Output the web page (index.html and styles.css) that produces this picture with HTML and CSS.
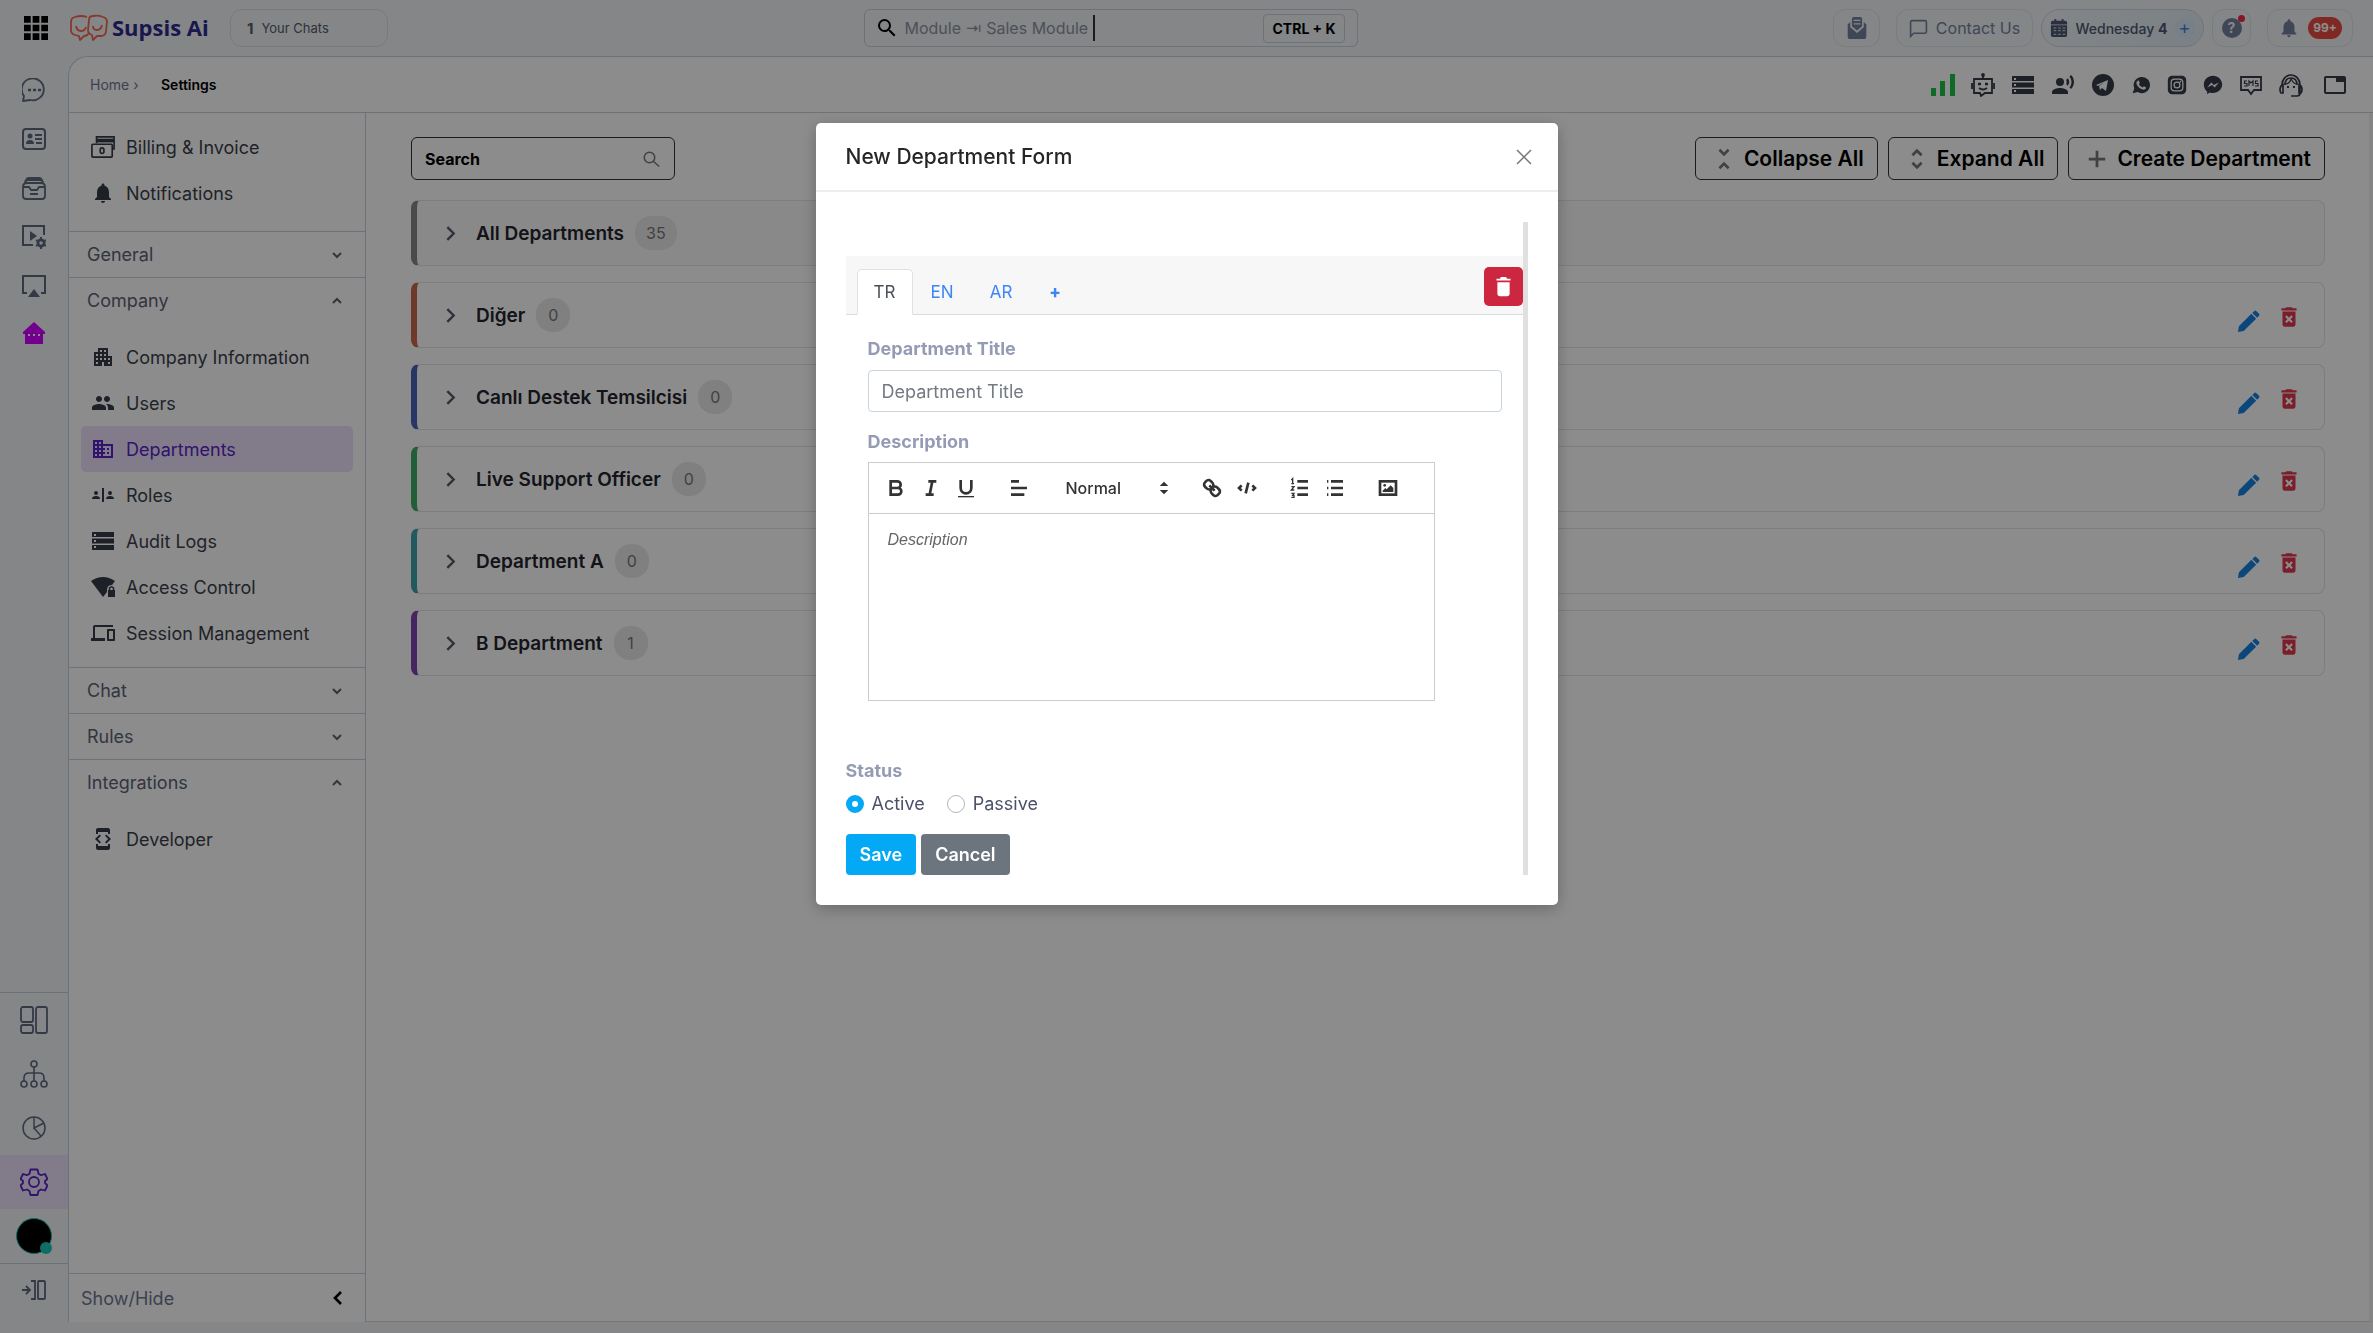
FILE: index.html
```html
<!DOCTYPE html>
<html lang="en">

<head>
    <meta charset="utf-8">
    <title>Supsis Ai - Departments</title>
    <link rel="stylesheet" href="styles.css">
</head>

<body>
    <!-- icon set -->
    <svg class="sprite" aria-hidden="true">
        <symbol id="i-chevron" viewBox="0 0 24 24"><path d="M6 9l6 6 6-6" fill="none" stroke="currentColor" stroke-width="3"/></symbol>
        <symbol id="i-right" viewBox="0 0 24 24"><path d="M8 4l8 8-8 8" fill="none" stroke="currentColor" stroke-width="3"/></symbol>
        <symbol id="i-search" viewBox="0 0 24 24"><path d="M15.5 14h-.79l-.28-.27A6.471 6.471 0 0 0 16 9.5 6.5 6.5 0 1 0 9.5 16c1.61 0 3.09-.59 4.23-1.57l.27.28v.79l5 4.99L20.49 19l-4.99-5zm-6 0C7.01 14 5 11.99 5 9.5S7.01 5 9.5 5 14 7.01 14 9.5 11.99 14 9.5 14z"/></symbol>
        <symbol id="i-bell" viewBox="0 0 24 24"><path d="M12 22c1.1 0 2-.9 2-2h-4c0 1.1.89 2 2 2zm6-6v-5c0-3.07-1.64-5.64-4.5-6.32V4c0-.83-.67-1.5-1.5-1.5s-1.5.67-1.5 1.5v.68C7.63 5.36 6 7.92 6 11v5l-2 2v1h16v-1l-2-2z"/></symbol>
        <symbol id="i-storage" viewBox="0 0 24 24"><path d="M1 21h22v-5H1v5zm2-4h2v2H3v-2zM1 3v5h22V3H1zm4 4H3V5h2v2zm-4 7.500h22v-5H1v5zm2-3.500h2v2H3v-2z"/></symbol>
        <symbol id="i-pencil" viewBox="0 0 24 24"><path d="M1 23l1-6L15 4l5 5L7 22zM16 3l2-2q1-1 2 0l3 3q1 1 0 2l-2 2z"/></symbol>
        <symbol id="i-remove" viewBox="0 0 24 24"><path d="M6 19c0 1.1.9 2 2 2h8c1.1 0 2-.9 2-2V7H6v12zm2.46-7.12l1.41-1.41L12 12.59l2.12-2.12 1.41 1.41L13.41 14l2.12 2.12-1.41 1.41L12 15.41l-2.12 2.12-1.41-1.41L10.59 14l-2.13-2.12zM15.5 4l-1-1h-5l-1 1H5v2h14V4z"/></symbol>
    </svg>

    <header class="topbar">
        <button class="apps" aria-label="Apps">
            <svg viewBox="0 0 25 25"><path d="M0 0h7v7H0zM9 0h7v7H9zM18 0h7v7h-7zM0 9h7v7H0zM9 9h7v7H9zM18 9h7v7h-7zM0 18h7v7H0zM9 18h7v7H9zM18 18h7v7h-7z"/></svg>
        </button>
        <a class="logo" href="#">
            <svg viewBox="0 0 38 28" fill="none" stroke="#f4694f" stroke-width="1.8" stroke-linejoin="round">
                <path d="M17 3Q11 1 5 3 1 4 1 8v8q0 4 4 5l4 1 1 4 4-4q4 0 5-4"/>
                <path d="M23 2q-4 0-4 4l-1 10q0 4 4 5l1 5 4-4h5q4-1 4-5l1-9q0-4-4-5-5-2-10-1z"/>
                <path d="M6 12q1 5 5 5t5-4M23 12q0 4 4 4t5-5"/>
            </svg>
            <span>Supsis Ai</span>
        </a>
        <div class="your-chats"><b>1</b> Your Chats</div>

        <div class="module-search">
            <svg><use href="#i-search"/></svg>
            <input type="text" aria-label="Search module" placeholder="Module ⇥ Sales Module">
            <i class="caret"></i>
            <kbd>CTRL + K</kbd>
        </div>

        <div class="top-actions">
            <button class="pill inbox" aria-label="Inbox">
                <svg viewBox="0 0 22 26"><path d="M5 2q0-2 2-2h8q2 0 2 2v9l-6 5-6-5zM0 9l3-3v6l8 7 8-7V6l3 3v14q0 3-3 3H3q-3 0-3-3z"/><path d="M7 4h8M7 8h8" stroke="#f0f4f8" stroke-width="1.5"/></svg>
            </button>
            <button class="pill contact">
                <svg viewBox="0 0 24 24" fill="none" stroke="currentColor" stroke-width="2"><path d="M2 22V4q0-2 2-2h16q2 0 2 2v12q0 2-2 2H6z"/></svg>
                Contact Us
            </button>
            <button class="pill date">
                <svg viewBox="0 0 18 20"><path d="M4 0h2v2h6V0h2v2h2q2 0 2 2v2H0V4q0-2 2-2h2zM0 7h18v11q0 2-2 2H2q-2 0-2-2z"/><path d="M3 10h3M8 10h3M13 10h3M3 13h3M8 13h3M13 13h3M3 17h3M8 17h3M13 17h3" stroke="#f0f4f8" stroke-width="1"/></svg>
                <span>Wednesday <b>4</b></span>
                <i class="plus">+</i>
            </button>
            <button class="pill help" aria-label="Help">
                <span class="question">?</span>
                <i class="red-dot"></i>
            </button>
            <button class="pill alerts" aria-label="Notifications">
                <svg><use href="#i-bell"/></svg>
                <span class="count">99+</span>
            </button>
        </div>
    </header>

    <div class="layout">
        <nav class="rail" aria-label="Modules">
            <div class="rail-top">
                <a href="#" aria-label="Chats"><svg viewBox="0 0 24 24" fill="none" stroke="currentColor" stroke-width="1.8"><path d="M1 23l1-5A11 11 0 1 1 8 22z" stroke-linejoin="round"/><path d="M6 12h3M11 12h3M16 12h3" stroke-width="2.5"/></svg></a>
                <a href="#" aria-label="Contacts"><svg viewBox="0 0 24 24"><rect x="1" y="2" width="22" height="20" rx="3" fill="none" stroke="currentColor" stroke-width="2"/><circle cx="8" cy="9" r="2.5"/><path d="M4 17q0-4 4-4t4 4zM13 7h7v2h-7zM13 11h7v2h-7zM14 15h6v2h-6z"/></svg></a>
                <a href="#" aria-label="Archive"><svg viewBox="0 0 24 24" fill="none" stroke="currentColor" stroke-width="1.8"><path d="M4 4q1-2 3-2h10q2 0 3 2M3 7q0-3 3-3h12q3 0 3 3M1 11q0-4 4-4h14q4 0 4 4v9q0 3-3 3H4q-3 0-3-3zM1 11h6l2 3h6l2-3h6M8 18h8"/></svg></a>
                <a href="#" aria-label="Media settings"><svg viewBox="0 0 24 24"><path d="M11 20H1V1h21v9" fill="none" stroke="currentColor" stroke-width="2"/><path d="M8 6l7 5-7 5z"/><circle cx="19" cy="18" r="3" fill="none" stroke="currentColor" stroke-width="3"/><path d="M19 12v12M14 15l10 6M24 15l-10 6" stroke="currentColor" stroke-width="2"/><circle cx="19" cy="18" r="1.7" fill="#f0f4f8"/></svg></a>
                <a href="#" aria-label="Screen"><svg viewBox="0 0 24 24"><path d="M5 19H1V2h22v17h-4" fill="none" stroke="currentColor" stroke-width="2"/><path d="M12 15l6 8H6z"/></svg></a>
                <a href="#" aria-label="Bot home" class="house"><svg viewBox="0 0 24 24"><path d="M12 1l11 10v2h-2v10H3V13H1v-2z"/><path d="M6 14h2M11 14h2M16 14h2" stroke="#fff" stroke-width="2"/></svg></a>
            </div>
            <div class="rail-bottom">
                <a href="#" aria-label="Boards"><svg class="big" viewBox="0 0 28 28" fill="none" stroke="currentColor" stroke-width="1.8"><rect x="1" y="1" width="12" height="15" rx="2"/><rect x="1" y="19" width="12" height="8" rx="2"/><rect x="16" y="1" width="11" height="26" rx="2"/></svg></a>
                <a href="#" aria-label="Flow"><svg class="big" viewBox="0 0 28 28" fill="none" stroke="currentColor" stroke-width="1.6"><circle cx="14" cy="4" r="3"/><circle cx="4" cy="24" r="3"/><circle cx="14" cy="24" r="3"/><circle cx="24" cy="24" r="3"/><path d="M14 7v14M4 21v-3q0-5 5-5h10q5 0 5 5v3"/></svg></a>
                <a href="#" aria-label="Reports"><svg viewBox="0 0 24 24" fill="none" stroke="currentColor" stroke-width="1.5"><circle cx="12" cy="12" r="11"/><path d="M12 1v11l10-5M12 12l7 8"/></svg></a>
                <a href="#" aria-label="Settings" class="active"><svg class="big" viewBox="0 0 28 28" fill="none" stroke="currentColor" stroke-width="1.8" stroke-linejoin="round"><circle cx="14" cy="14" r="5"/><path d="M10.500 1.500h7l1 4.200 2.500 1.500 4-1.200 2.500 5-2.500 2v2l2.500 2.500-2.500 5-4-1-2.500 1.500-1 4h-7l-1-4L7 21.500l-4 1-2.500-5L3 15v-2L.5 11 3 6l4 1.200 2.500-1.500z"/></svg></a>
                <a href="#" aria-label="Profile"><span class="avatar"><i></i></span></a>
            </div>
            <button class="rail-toggle" aria-label="Expand menu"><svg viewBox="0 0 24 20" fill="none" stroke="currentColor" stroke-width="1.8"><path d="M0 10h7M4 6l4 4-4 4M9 1h4v18H9"/><rect x="16" y="1" width="7" height="18" rx="1"/></svg></button>
        </nav>

        <div class="page">
            <div class="crumbs">
                <a href="#">Home ›</a>
                <strong>Settings</strong>
                <div class="channels">
                    <svg class="signal" viewBox="0 0 24 24"><path d="M0 15h5v8H0zM9 8h5v15H9zM19 1h5v22h-5z"/></svg>
                    <svg viewBox="0 0 24 24" fill="none" stroke="currentColor" stroke-width="1.8"><circle cx="12" cy="2" r="1"/><path d="M12 3v3M3 6h18v14h-7l-4 3-1-3H3zM1 10v6M23 10v6M8 15q4 3 8 0"/><path d="M7 11h3M14 11h3" stroke-width="2.500"/></svg>
                    <svg><use href="#i-storage"/></svg>
                    <svg viewBox="0 0 24 24"><circle cx="9" cy="9" r="4"/><path d="M9 15c-2.670 0-8 1.340-8 4v2h16v-2c0-2.660-5.330-4-8-4zM16.760 5.360l-1.680 1.690c.84 1.180.84 2.710 0 3.890l1.680 1.690c2.020-2.020 2.020-5.070 0-7.270zM20.070 2l-1.630 1.630c2.770 3.020 2.770 7.560 0 10.740L20.070 16c3.900-3.890 3.910-9.950 0-14z"/></svg>
                    <svg viewBox="0 0 24 24"><circle cx="12" cy="12" r="11"/><path d="M5 12l12-5-2 11-4-3-2 2-1-4 6-4-7 4z" fill="#fff"/></svg>
                    <svg class="small" viewBox="0 0 24 24"><path d="M2 22l2-6A9.800 9.800 0 1 1 8 20.500z"/><path d="M8 7c1-1 2 0 2.500 2.500L9.500 11q1.500 3 4.500 4l1.500-1.500L18 15c0 2-2 3-4 2.500C10 16.500 7 13 6.500 10 6.500 8.500 7 7.500 8 7z" fill="#fff"/></svg>
                    <svg class="small" viewBox="0 0 24 24"><rect x="1" y="1" width="22" height="22" rx="5"/><rect x="5" y="5" width="14" height="14" rx="4" fill="none" stroke="#fff" stroke-width="1.500"/><circle cx="12" cy="12" r="3.500" fill="none" stroke="#fff" stroke-width="1.500"/><circle cx="16" cy="8" r="1" fill="#fff"/></svg>
                    <svg class="small" viewBox="0 0 24 24"><path d="M12 1C6 1 1 5.500 1 11.500 1 15 2.500 18 5 20v3l3-2q2 .6 4 .6c6 0 11-4.500 11-10.100S18 1 12 1z"/><path d="M5 15l5-6 3 3 6-3-5 6-3-3z" fill="#fff"/></svg>
                    <svg viewBox="0 0 24 24" fill="none" stroke="currentColor" stroke-width="1.800"><path d="M2 4h20v13h-7l-3 4-3-4H2z"/><path d="M8 8H5.500v2.500H8V13H5M10 13V8l2 2 2-2v5M19 8h-2.500v2.500H19V13h-3" stroke-width="1.200"/></svg>
                    <svg class="agent" viewBox="0 0 24 24" fill="none" stroke="currentColor" stroke-width="1.700"><path d="M3 12a9 10 0 0 1 18 0v8q0 3-3 3h-6M6 12Q6 5 12 5t6 7M2 13q-2 4 0 7h2v-8zM22 13q2 4 0 7h-2v-8z"/><path d="M7 11q4-1 5-5 2 4 5 5" stroke-width="1.200"/><path d="M8 14h2M14 14h2" stroke-width="2"/></svg>
                    <svg viewBox="0 0 24 24"><path d="M21 3H3c-1.100 0-2 .9-2 2v14c0 1.100.9 2 2 2h18c1.100 0 2-.9 2-2V5c0-1.100-.9-2-2-2zm0 16H3V5h10v4h8v10z"/></svg>
                </div>
            </div>

            <div class="columns">
                <aside class="menu">
                    <div class="menu-group first">
                        <a href="#"><svg viewBox="0 0 26 26" fill="none" stroke="currentColor" stroke-width="1.800"><path d="M6 9V2h19v13h-2"/><path d="M6 6h19" stroke-width="4"/><rect x="1" y="10" width="22" height="14" rx="1"/><rect x="10" y="14" width="4" height="6" rx="2"/></svg>Billing &amp; Invoice</a>
                        <a href="#"><svg><use href="#i-bell"/></svg>Notifications</a>
                    </div>
                    <button class="menu-head">General<svg><use href="#i-chevron"/></svg></button>
                    <button class="menu-head open">Company<svg><use href="#i-chevron"/></svg></button>
                    <div class="menu-group">
                        <a href="#"><svg viewBox="0 0 24 24"><path d="M17 11V3H7v4H3v14h8v-4h2v4h8V11h-4zM7 19H5v-2h2v2zm0-4H5v-2h2v2zm0-4H5V9h2v2zm4 4H9v-2h2v2zm0-4H9V9h2v2zm0-4H9V5h2v2zm4 8h-2v-2h2v2zm0-4h-2V9h2v2zm0-4h-2V5h2v2zm4 12h-2v-2h2v2zm0-4h-2v-2h2v2z"/></svg>Company Information</a>
                        <a href="#"><svg viewBox="0 0 24 24"><path d="M16 11c1.660 0 2.990-1.340 2.990-3S17.660 5 16 5c-1.660 0-3 1.340-3 3s1.340 3 3 3zm-8 0c1.660 0 2.990-1.340 2.990-3S9.660 5 8 5C6.340 5 5 6.340 5 8s1.340 3 3 3zm0 2c-2.330 0-7 1.170-7 3.500V19h14v-2.500c0-2.330-4.670-3.500-7-3.500zm8 0c-.29 0-.62.02-.97.05 1.160.84 1.970 1.970 1.970 3.450V19h6v-2.500c0-2.330-4.670-3.500-7-3.500z"/></svg>Users</a>
                        <a href="#" class="active"><svg viewBox="0 0 24 24"><path d="M12 7V3H2v18h20V7H12zM6 19H4v-2h2v2zm0-4H4v-2h2v2zm0-4H4V9h2v2zm0-4H4V5h2v2zm4 12H8v-2h2v2zm0-4H8v-2h2v2zm0-4H8V9h2v2zm0-4H8V5h2v2zm10 12h-8v-2h2v-2h-2v-2h2v-2h-2V9h8v10zm-2-8h-2v2h2v-2zm0 4h-2v2h2v-2z"/></svg>Departments</a>
                        <a href="#"><svg viewBox="0 0 24 24"><path d="M11 5h2v14h-2zM1 16q0-3 4-3t4 3zM15 16q0-3 4-3t4 3z"/><circle cx="5" cy="10" r="2"/><circle cx="19" cy="10" r="2"/></svg>Roles</a>
                        <a href="#"><svg><use href="#i-storage"/></svg>Audit Logs</a>
                        <a href="#"><svg viewBox="0 0 24 24"><path d="M0 6q12-8 24 0l-3 4q-5 0-5 5v2l-4 5z"/><path d="M17 15h7v7h-7z"/><path d="M18.500 15v-2q2-2.500 4 0v2" fill="none" stroke="currentColor" stroke-width="1.500"/></svg>Access Control</a>
                        <a href="#"><svg viewBox="0 0 24 24"><path d="M4 6h18V4H4c-1.100 0-2 .9-2 2v11H0v3h14v-3H4V6zm19 2h-6c-.55 0-1 .45-1 1v10c0 .55.45 1 1 1h6c.55 0 1-.45 1-1V9c0-.55-.45-1-1-1zm-1 10h-4v-8h4v8z"/></svg>Session Management</a>
                    </div>
                    <button class="menu-head">Chat<svg><use href="#i-chevron"/></svg></button>
                    <button class="menu-head">Rules<svg><use href="#i-chevron"/></svg></button>
                    <button class="menu-head open">Integrations<svg><use href="#i-chevron"/></svg></button>
                    <div class="menu-group">
                        <a href="#"><svg viewBox="0 0 24 24"><path d="M7 5h10v2h2V3c0-1.100-.9-1.990-2-1.990L7 1c-1.100 0-2 .9-2 2v4h2V5zm8.410 11.590L20 12l-4.590-4.590L14 8.830 17.170 12 14 15.170l1.410 1.420zM10 15.170L6.830 12 10 8.830 8.590 7.410 4 12l4.590 4.590L10 15.170zM17 19H7v-2H5v4c0 1.100.9 2 2 2h10c1.100 0 2-.9 2-2v-4h-2v2z"/></svg>Developer</a>
                    </div>
                    <button class="show-hide">Show/Hide<svg viewBox="0 0 24 24"><path d="M16 4l-8 8 8 8" fill="none" stroke="#000" stroke-width="3.500"/></svg></button>
                </aside>

                <main class="content">
                    <div class="tools">
                        <div class="search-box">
                            <input type="text" aria-label="Search departments" placeholder="Search">
                            <svg viewBox="0 0 24 24" fill="none" stroke="currentColor" stroke-width="2"><circle cx="10" cy="10" r="7"/><path d="M15 15l8 7"/></svg>
                        </div>
                        <button><svg viewBox="0 0 24 24" fill="none" stroke="currentColor" stroke-width="3"><path d="M7 2l5 5 5-5M7 22l5-5 5 5"/></svg>Collapse All</button>
                        <button><svg viewBox="0 0 24 24" fill="none" stroke="currentColor" stroke-width="3"><path d="M7 8l5-5 5 5M7 16l5 5 5-5"/></svg>Expand All</button>
                        <button><svg viewBox="0 0 24 24" fill="none" stroke="currentColor" stroke-width="3"><path d="M12 3v18M3 12h18"/></svg>Create Department</button>
                    </div>

                    <ul class="departments">
                        <li class="all"><button class="toggle" aria-label="Expand"><svg><use href="#i-right"/></svg></button>All Departments<span class="badge">35</span></li>
                        <li class="orange"><button class="toggle" aria-label="Expand"><svg><use href="#i-right"/></svg></button>Diğer<span class="badge">0</span>
                            <button class="edit" aria-label="Edit"><svg><use href="#i-pencil"/></svg></button><button class="remove" aria-label="Delete"><svg><use href="#i-remove"/></svg></button></li>
                        <li class="blue"><button class="toggle" aria-label="Expand"><svg><use href="#i-right"/></svg></button>Canlı Destek Temsilcisi<span class="badge">0</span>
                            <button class="edit" aria-label="Edit"><svg><use href="#i-pencil"/></svg></button><button class="remove" aria-label="Delete"><svg><use href="#i-remove"/></svg></button></li>
                        <li class="green"><button class="toggle" aria-label="Expand"><svg><use href="#i-right"/></svg></button>Live Support Officer<span class="badge">0</span>
                            <button class="edit" aria-label="Edit"><svg><use href="#i-pencil"/></svg></button><button class="remove" aria-label="Delete"><svg><use href="#i-remove"/></svg></button></li>
                        <li class="teal"><button class="toggle" aria-label="Expand"><svg><use href="#i-right"/></svg></button>Department A<span class="badge">0</span>
                            <button class="edit" aria-label="Edit"><svg><use href="#i-pencil"/></svg></button><button class="remove" aria-label="Delete"><svg><use href="#i-remove"/></svg></button></li>
                        <li class="purple"><button class="toggle" aria-label="Expand"><svg><use href="#i-right"/></svg></button>B Department<span class="badge">1</span>
                            <button class="edit" aria-label="Edit"><svg><use href="#i-pencil"/></svg></button><button class="remove" aria-label="Delete"><svg><use href="#i-remove"/></svg></button></li>
                    </ul>
                </main>
            </div>
        </div>
    </div>

    <div class="overlay">
        <div class="modal" role="dialog" aria-labelledby="modal-title">
            <div class="modal-header">
                <h2 id="modal-title">New Department Form</h2>
                <button class="close" aria-label="Close"><svg viewBox="0 0 16 16"><path d="M1 1l14 14M15 1L1 15" stroke="currentColor" stroke-width="1.500"/></svg></button>
            </div>
            <form class="modal-body">
                <div class="tabs">
                    <button type="button" class="tab active">TR</button>
                    <button type="button" class="tab">EN</button>
                    <button type="button" class="tab">AR</button>
                    <button type="button" class="tab add">+</button>
                    <button type="button" class="delete" aria-label="Delete language"><svg viewBox="0 0 24 24"><path d="M5 20q0 3 3 3h8q3 0 3-3V7H5zM20 3h-4l-1-2H9L8 3H4v2h16z"/></svg></button>
                </div>

                <div class="fields">
                    <label for="title">Department Title</label>
                    <input type="text" id="title" name="title" placeholder="Department Title">
                    <label for="description">Description</label>
                    <div class="editor">
                        <div class="editor-tools">
                            <button type="button" aria-label="Bold"><svg viewBox="0 0 18 18"><path d="M5 4h5a2.500 2.500 0 0 1 0 5H5zM5 9h5.500a2.500 2.500 0 0 1 0 5H5z"/></svg></button>
                            <button type="button" aria-label="Italic"><svg viewBox="0 0 18 18"><path d="M7 4h6M5 14h6M8 14l2-10"/></svg></button>
                            <button type="button" aria-label="Underline" class="end"><svg viewBox="0 0 18 18"><path d="M5 3v6a4 4 0 0 0 8 0V3"/><path d="M3 15.500h12" stroke-width="1"/></svg></button>
                            <button type="button" aria-label="Align" class="end"><svg viewBox="0 0 18 18"><path d="M3 9h12M3 14h10M3 4h6"/></svg></button>
                            <select aria-label="Text size">
                                <option>Normal</option>
                                <option>Heading</option>
                            </select>
                            <svg class="updown" viewBox="0 0 18 18"><path d="M7 11h4l-2 2zM7 7h4L9 5z"/></svg>
                            <button type="button" aria-label="Link"><svg viewBox="0 0 18 18"><path d="M7 7l4 4M8.900 4.577a3.476 3.476 0 0 1 .36 4.679A3.476 3.476 0 0 1 4.577 8.900C3.185 7.500 2.035 6.400 4.217 4.217S7.500 3.185 8.900 4.577zM13.423 9.100a3.476 3.476 0 0 0-4.679-.36 3.476 3.476 0 0 0 .36 4.679c1.392 1.392 2.500 2.542 4.679.36S14.815 10.500 13.423 9.100z"/></svg></button>
                            <button type="button" aria-label="Code" class="end"><svg viewBox="0 0 18 18"><path d="M5 7L3 9l2 2M13 7l2 2-2 2M10 5L8 13"/></svg></button>
                            <button type="button" aria-label="Ordered list"><svg viewBox="0 0 18 18"><path d="M7 4h8M7 9h8M7 14h8"/><path d="M2.500 3l1-1v4M2.500 5.700h2M2.500 8h2l-2 2.500h2.200M2.500 13h2l-1 1.500h1V16h-2" stroke-width="1"/></svg></button>
                            <button type="button" aria-label="Bullet list" class="end"><svg viewBox="0 0 18 18"><path d="M6 4h9M6 9h9M6 14h9M3 4h1M3 9h1M3 14h1"/></svg></button>
                            <button type="button" aria-label="Image"><svg viewBox="0 0 18 18"><rect x="3" y="4" width="12" height="10"/><circle cx="6.500" cy="7" r="1" fill="currentColor" stroke="none"/><path d="M5 12v-1l2-2 1 1 3-3 2 2v3z" fill="currentColor" stroke="none"/></svg></button>
                        </div>
                        <textarea id="description" name="description" placeholder="Description"></textarea>
                    </div>
                </div>

                <fieldset>
                    <legend>Status</legend>
                    <input type="radio" id="active" name="status" checked>
                    <label for="active">Active</label>
                    <input type="radio" id="passive" name="status">
                    <label for="passive">Passive</label>
                </fieldset>
                <div class="form-buttons">
                    <button type="button" class="save">Save</button>
                    <button type="button" class="cancel">Cancel</button>
                </div>
            </form>
        </div>
    </div>
</body>

</html>
```
FILE: styles.css
```css
* {
    box-sizing: border-box;
}

body {
    margin: 0;
    height: 100vh;
    padding-bottom: 11px;
    display: flex;
    flex-direction: column;
    background: #f0f4f8;
    color: #3b3f4c;
    font-family: Inter, "Liberation Sans", sans-serif;
    font-size: 18px;
}

button,
input,
select,
textarea {
    font: inherit;
    color: inherit;
}

button {
    padding: 0;
    border: none;
    background: none;
    cursor: pointer;
}

a {
    color: inherit;
    text-decoration: none;
}

svg {
    width: 24px;
    height: 24px;
    fill: currentColor;
    flex: none;
}

svg[fill="none"] {
    fill: none;
}

i {
    font-style: normal;
}

.sprite {
    display: none;
}

/* top bar */
.topbar {
    height: 56px;
    flex: none;
    display: flex;
    align-items: center;
    padding: 0 20px 0 24px;
}

.apps {
    display: flex;
    color: #000;
    margin-right: 22px;
}

.logo {
    display: flex;
    align-items: center;
    gap: 4px;
    width: 138px;
    margin-right: 22px;
    color: #2f2a8c;
    font-family: "Open Sans", sans-serif;
    font-size: 22px;
    font-weight: 700;
    line-height: 26px;
    white-space: nowrap;
}

.logo svg {
    width: 38px;
    height: 28px;
}

.logo span {
    padding-bottom: 3px;
}

.your-chats {
    width: 158px;
    height: 38px;
    padding: 0 16px;
    display: flex;
    align-items: center;
    gap: 8px;
    border: 1px solid #d9dfe6;
    border-radius: 12px;
    color: #555b68;
    font-size: 13px;
}

.your-chats b {
    font-size: 15px;
}

.module-search {
    width: 494px;
    height: 38px;
    margin: 0 auto;
    padding: 0 12px 0 10px;
    display: flex;
    align-items: center;
    border: 1px solid #c5cfda;
    border-radius: 6px;
}

.module-search svg {
    color: #000;
    margin-right: 6px;
}

.module-search input {
    width: 188px;
    padding: 0;
    border: none;
    background: none;
    font-size: 16px;
}

.module-search input::placeholder {
    color: #8c929d;
}

.caret {
    width: 2px;
    height: 26px;
    background: #333;
}

kbd {
    margin-left: auto;
    height: 29px;
    padding: 0 8px;
    border: 1px solid #c5cfda;
    border-radius: 4px;
    color: #000;
    font: 700 14px/27px Inter, sans-serif;
}

.top-actions {
    display: flex;
    gap: 8px;
    color: #74829e;
}

.pill {
    height: 38px;
    display: flex;
    align-items: center;
    justify-content: center;
    gap: 8px;
    border: 1px solid #dde3ea;
    border-radius: 12px;
}

.inbox {
    width: 47px;
    margin-right: 8px;
}

.inbox svg {
    width: 22px;
    height: 22px;
}

.contact {
    width: 137px;
    font-size: 16px;
}

.contact svg {
    width: 19px;
    height: 19px;
}

.date {
    width: 163px;
    border-radius: 19px;
    border-color: #ccd5df;
    background: linear-gradient(135deg, #f0f4f8, #dfeaf3);
    color: #4d5870;
    font-size: 14px;
    font-weight: 500;
    gap: 7px;
}

.date svg {
    width: 18px;
    height: 18px;
}

.date .plus {
    width: 20px;
    height: 20px;
    border-radius: 10px;
    background: #d9e8f7;
    color: #3f86d8;
    font-size: 18px;
    font-weight: 400;
    line-height: 19px;
}

.help {
    position: relative;
    width: 39px;
    margin-right: 8px;
}

.question {
    width: 20px;
    height: 20px;
    border-radius: 50%;
    background: #74829e;
    color: #f0f4f8;
    font-size: 14px;
    font-weight: 700;
    line-height: 20px;
}

.red-dot {
    position: absolute;
    top: 5px;
    right: 5px;
    width: 7px;
    height: 7px;
    border-radius: 50%;
    background: #f02849;
}

.alerts {
    width: 86px;
}

.alerts svg {
    width: 22px;
    height: 22px;
}

.count {
    padding: 0 5px;
    height: 22px;
    border-radius: 11px;
    background: #ea4a43;
    color: #fff;
    font-size: 12px;
    font-weight: 700;
    line-height: 22px;
}

.layout {
    flex: 1;
    min-height: 0;
    display: flex;
}

/* icon rail */
.rail {
    width: 68px;
    display: flex;
    flex-direction: column;
    color: #5f6980;
}

.rail a,
.rail-toggle {
    display: flex;
    align-items: center;
    justify-content: center;
}

.rail-top {
    flex: 1;
    padding-top: 9px;
}

.rail-top a {
    height: 49px;
}

.rail .house {
    color: #d000ff;
    height: 45px;
}

.rail-bottom {
    border-top: 1px solid #c5cfda;
}

.rail-bottom a {
    height: 54px;
}

.rail .big {
    width: 28px;
    height: 28px;
}

.rail .active {
    background: #ede2fc;
    color: #5a24c8;
}

.avatar {
    position: relative;
    width: 36px;
    height: 36px;
    border: 1px solid #1ec6b6;
    border-radius: 50%;
    background: #000;
}

.avatar i {
    position: absolute;
    right: -1px;
    bottom: -1px;
    width: 12px;
    height: 12px;
    border-radius: 50%;
    background: #1ec6b6;
}

.rail-toggle {
    height: 59px;
    padding-bottom: 6px;
    border-top: 1px solid #c5cfda;
    color: #5f6980;
}

/* page */
.page {
    flex: 1;
    min-width: 0;
    display: flex;
    flex-direction: column;
    border: 1px solid #c5cfda;
    border-width: 1px 0 0 1px;
    border-radius: 20px 0 0 0;
    background: #fff;
}

.crumbs {
    height: 56px;
    flex: none;
    padding: 0 26px 0 21px;
    display: flex;
    align-items: center;
    border-bottom: 1px solid #c5cfda;
    color: #6d7793;
    font-size: 14px;
}

.crumbs a {
    width: 71px;
}

.crumbs strong {
    color: #000;
    font-weight: 600;
}

.channels {
    margin-left: auto;
    display: flex;
    align-items: center;
    gap: 16px;
    color: #363b47;
}

.channels .small {
    width: 20px;
    height: 20px;
}

.channels .agent {
    margin-right: 4px;
}

.channels .signal {
    color: #20c048;
}

.columns {
    flex: 1;
    min-height: 0;
    display: flex;
}

.menu {
    width: 297px;
    flex: none;
    display: flex;
    flex-direction: column;
    border-right: 1px solid #c5cfda;
}

.menu-group {
    padding: 11px 12px;
}

.menu-group.first {
    padding-bottom: 15px;
}

.menu a {
    height: 46px;
    padding: 0 9px;
    display: flex;
    align-items: center;
    gap: 10px;
    border-radius: 5px;
}

.menu-group svg {
    width: 26px;
    color: #363b47;
}

.menu a.active,
.menu a.active svg {
    background: #ede2fc;
    color: #5a24c8;
}

.menu-head {
    height: 46px;
    flex: none;
    padding: 0 20px 0 18px;
    display: flex;
    align-items: center;
    justify-content: space-between;
    border-top: 1px solid #c5cfda;
    color: #5c6377;
}

.menu-head svg {
    width: 16px;
    height: 16px;
}

.menu-head.open svg {
    transform: rotate(180deg);
}

.show-hide {
    margin-top: auto;
    height: 49px;
    padding: 0 18px 0 12px;
    display: flex;
    align-items: center;
    justify-content: space-between;
    border-top: 1px solid #c5cfda;
    color: #6d7793;
}

.show-hide svg {
    width: 18px;
    height: 18px;
}

/* departments */
.content {
    flex: 1;
    min-width: 0;
    padding: 24px 44px 0 45px;
    border-right: 4px solid #f0f0f0;
    border-bottom: 1px solid #d8d8d8;
}

.tools {
    display: flex;
    gap: 10px;
    color: #000;
}

.tools button,
.search-box {
    height: 43px;
    display: flex;
    align-items: center;
    border: 1px solid #30343f;
    border-radius: 6px;
}

.tools button {
    gap: 9px;
    padding: 0 13px 0 17px;
    font-size: 21px;
    font-weight: 600;
    white-space: nowrap;
}

.tools button svg,
.search-box svg {
    width: 22px;
    color: #777;
}

.search-box {
    width: 264px;
    margin-right: auto;
    padding: 0 12px 0 13px;
}

.search-box input {
    flex: 1;
    min-width: 0;
    padding: 0;
    border: none;
    background: none;
    font-size: 16px;
    font-weight: 700;
}

.search-box input::placeholder {
    color: #000;
}

.search-box svg {
    height: 18px;
}

.departments {
    list-style: none;
    margin: 20px 0 0;
    padding: 0;
}

.departments li {
    height: 66px;
    margin-bottom: 16px;
    padding: 0 22px;
    display: flex;
    align-items: center;
    border: 1px solid #e4e4e4;
    border-left: 6px solid #888;
    border-radius: 8px;
    color: #23252e;
    font-size: 19px;
    font-weight: 600;
}

.departments li.all {
    background: #f9f9f9;
}

.departments li.orange {
    border-left-color: #c8694c;
}

.departments li.blue {
    border-left-color: #4a62b8;
}

.departments li.green {
    border-left-color: #3fae68;
}

.departments li.teal {
    border-left-color: #3fa3ad;
}

.departments li.purple {
    border-left-color: #7f43ae;
}

.toggle {
    display: flex;
    margin-right: 16px;
    padding-left: 2px;
    color: #555a66;
}

.toggle svg {
    width: 19px;
    height: 19px;
}

.badge {
    height: 34px;
    min-width: 34px;
    margin: 0 auto 0 11px;
    padding: 0 11px;
    border-radius: 16px;
    background: #e9e9e9;
    color: #777;
    font-size: 16px;
    font-weight: 400;
    line-height: 34px;
    text-align: center;
}

.edit,
.remove {
    padding-top: 12px;
    display: flex;
    color: #1581e0;
}

.edit {
    margin-right: 16px;
}

.edit svg {
    width: 23px;
    height: 23px;
}

.remove {
    padding-top: 4px;
    color: #e03850;
}

.remove svg {
    width: 26px;
    height: 26px;
}

/* modal */
.overlay {
    position: fixed;
    inset: 0;
    display: flex;
    align-items: flex-start;
    justify-content: center;
    padding-top: 123px;
    background: rgba(0, 0, 0, .45);
}

.modal {
    width: 742px;
    border-radius: 5px;
    background: #fff;
    box-shadow: 0 4px 16px rgba(0, 0, 0, .25);
}

.modal-header {
    height: 69px;
    padding: 0 26px 0 30px;
    display: flex;
    align-items: center;
    justify-content: space-between;
    border-bottom: 2px solid #eee;
}

.modal h2 {
    margin: 0;
    color: #262626;
    font-size: 21px;
    font-weight: 500;
}

.close {
    display: flex;
    color: #777;
}

.close svg {
    width: 16px;
    height: 16px;
}

.modal-body {
    margin: 30px;
    margin-bottom: 0;
    padding-top: 34px;
    border-right: 5px solid #e0e0e0;
}

.modal::after {
    content: "";
    display: block;
    height: 30px;
}

.tabs {
    height: 59px;
    padding-left: 11px;
    display: flex;
    align-items: flex-end;
    border-bottom: 1px solid #d8dce0;
    background: #f7f7f7;
}

.tab {
    height: 46px;
    width: 59px;
    margin-bottom: -1px;
    color: #3c86f8;
    font-size: 17px;
}

.tab.active {
    width: 56px;
    border: 1px solid #dee2e6;
    border-bottom-color: #fff;
    border-radius: 5px 5px 0 0;
    background: #fff;
    color: #495057;
}

.tab.add {
    width: 49px;
    font-weight: 800;
}

.delete {
    width: 39px;
    height: 39px;
    margin: 0 0 8px auto;
    display: flex;
    align-items: center;
    justify-content: center;
    border-radius: 5px;
    background: #cc2640;
    color: #fff;
}

.delete svg {
    width: 21px;
    height: 21px;
}

.fields {
    padding: 22px 21px 0 22px;
}

.fields label,
legend {
    display: block;
    padding: 0;
    color: #959bb5;
    font-size: 18px;
    font-weight: 700;
    line-height: 24px;
}

.fields input {
    width: 100%;
    height: 42px;
    margin: 9px 0 18px;
    padding: 0 13px;
    border: 1px solid #cbd3dc;
    border-radius: 4px;
    font-size: 18px;
}

.fields input::placeholder {
    color: #737a82;
}

.editor {
    width: 567px;
    margin-top: 8px;
    border: 1px solid #ccc;
}

.editor-tools {
    height: 51px;
    padding-left: 15px;
    display: flex;
    align-items: center;
    border-bottom: 1px solid #ccc;
    color: #333;
}

.editor-tools button {
    width: 35px;
    display: flex;
}

.editor-tools button.end {
    width: 53px;
}

.editor-tools svg {
    fill: none;
    stroke: currentColor;
    stroke-width: 2;
}

.editor-tools .updown {
    margin-right: 24px;
    fill: currentColor;
    stroke-width: 1;
}

select {
    width: 92px;
    padding: 0 0 0 6px;
    border: none;
    background: none;
    appearance: none;
    font-size: 16px;
    font-weight: 500;
}

textarea {
    display: block;
    width: 100%;
    height: 186px;
    padding: 16px 19px;
    border: none;
    resize: none;
    font: 16px/20px "Liberation Sans", sans-serif;
}

textarea::placeholder {
    color: #666;
    font-style: italic;
}

fieldset {
    margin: 58px 0 0;
    padding: 0;
    border: none;
    display: flex;
    align-items: center;
    color: #4b5268;
    font-size: 18px;
}

legend {
    margin-bottom: 8px;
}

fieldset label {
    line-height: 26px;
    margin-right: 22px;
}

input[type="radio"] {
    appearance: none;
    width: 18px;
    height: 18px;
    margin: 0 8px 0 0;
    border: 1px solid #adb5bd;
    border-radius: 50%;
    background: #fff;
}

input[type="radio"]:checked {
    border: 6px solid #03a9f4;
}

.form-buttons {
    margin-top: 17px;
    display: flex;
    gap: 5px;
}

.form-buttons button {
    height: 41px;
    padding: 0 14px;
    border-radius: 4px;
    background: #03a9f4;
    color: #fff;
    font-size: 18px;
    font-weight: 600;
}

.form-buttons .cancel {
    background: #6c757d;
}
```
